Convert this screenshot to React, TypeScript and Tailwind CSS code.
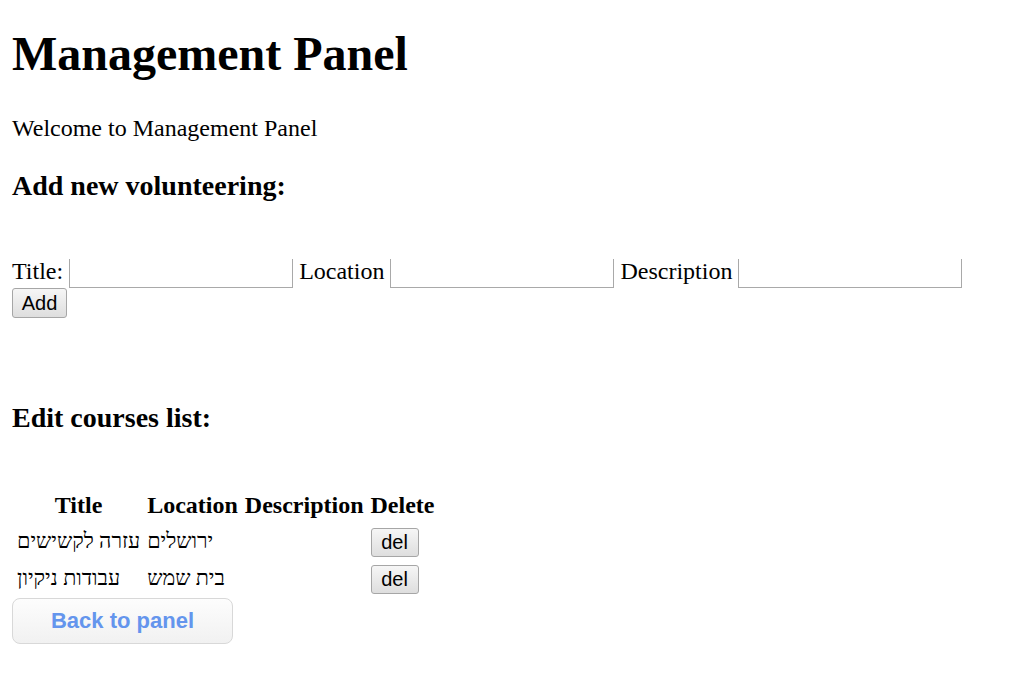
const courses = [
  { title: "עזרה לקשישים", location: "ירושלים", description: "" },
  { title: "עבודות ניקיון", location: "בית שמש", description: "" },
];

const serif = "font-['Liberation_Serif','Times_New_Roman','DejaVu_Serif',serif]";
const btn =
  "font-['Liberation_Sans',Arial,sans-serif] text-[20px] leading-none text-black bg-gradient-to-b from-[#f6f6f6] to-[#dedede] border border-[#a6a6a6] rounded-[3px]";
const input = "w-[224px] h-[29px] border border-t-0 border-[#a9a9a9] align-middle bg-white";
const cell = "px-[2px] py-[1px] leading-[30px]";

export default function App() {
  return (
    <div className={`${serif} bg-white text-black text-[24px] p-[12px] min-h-[694px]`}>
      <h1 className="text-[48px] font-bold leading-[55px] mt-[14px] mb-[33px]">Management Panel</h1>
      <p className="leading-[28px] my-[24px]">Welcome to Management Panel</p>
      <h3 className="text-[28px] font-bold leading-[32px] my-[28px]">Add new volunteering:</h3>

      <form className="mt-[55px] leading-[28px]" onSubmit={(e) => e.preventDefault()}>
        Title: <input className={input} /> Location <input className={input} /> Description{" "}
        <input className={input} /> <button className={`${btn} w-[55px] h-[30px]`}>Add</button>
      </form>

      <h3 className="text-[28px] font-bold leading-[32px] mt-[84px] mb-[52px]">Edit courses list:</h3>

      <table className="border-separate border-spacing-[3px] text-left">
        <thead>
          <tr>
            <th className={`${cell} text-center`}>Title</th>
            <th className={`${cell} text-center`}>Location</th>
            <th className={`${cell} text-center`}>Description</th>
            <th className={`${cell} text-center`}>Delete</th>
          </tr>
        </thead>
        <tbody>
          {courses.map((c) => (
            <tr key={c.title}>
              <td className={`${cell} text-[21.5px]`}>{c.title}</td>
              <td className={`${cell} text-[21.5px]`}>{c.location}</td>
              <td className={cell}>{c.description}</td>
              <td className={cell}>
                <button className={`${btn} w-[48px] h-[29px] align-middle`}>del</button>
              </td>
            </tr>
          ))}
        </tbody>
      </table>

      <button className="mt-[0px] w-[221px] h-[46px] rounded-[8px] border border-[#d8d8d8] bg-gradient-to-b from-[#fdfdfd] to-[#f1f1f1] font-['Liberation_Sans',Arial,sans-serif] font-bold text-[22px] text-[#6495ed]">
        Back to panel
      </button>
    </div>
  );
}
